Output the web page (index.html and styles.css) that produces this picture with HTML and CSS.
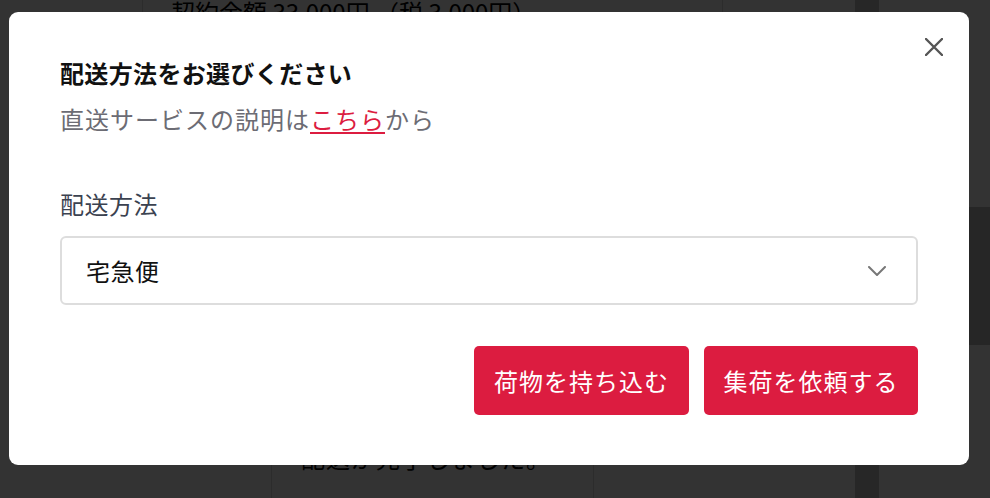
FILE: index.html
```html
<!DOCTYPE html>
<html lang="ja">
<head>
<meta charset="utf-8">
<title>配送方法の選択</title>
<link rel="stylesheet" href="styles.css">
</head>
<body>
  <div class="page">
    <main class="content">
      <div class="row row-top">契約金額 33,000円 （税 3,000円）</div>
      <div class="spacer"></div>
      <div class="row row-bottom">配送が完了しました。</div>
    </main>
    <div class="rail"></div>
    <aside class="side">
      <div class="side-block"></div>
    </aside>
  </div>

  <div class="overlay">
    <section class="modal" role="dialog" aria-labelledby="modal-title">
      <button class="close" type="button" aria-label="閉じる">
        <svg viewBox="0 0 18 18" width="18" height="18" aria-hidden="true">
          <path d="M1 1 L17 17 M17 1 L1 17" fill="none" stroke="#555" stroke-width="2.4" stroke-linecap="round"/>
        </svg>
      </button>
      <h2 class="modal-title" id="modal-title">配送方法をお選びください</h2>
      <p class="modal-sub">直送サービスの説明は<a class="link" href="#">こちら</a>から</p>

      <div class="field-label">配送方法</div>
      <div class="select" role="combobox" aria-expanded="false">
        <span class="select-value">宅急便</span>
        <svg class="chevron" viewBox="0 0 18 10" width="18" height="10" aria-hidden="true">
          <path d="M1 1 L9 9 L17 1" fill="none" stroke="#777" stroke-width="2" stroke-linecap="round" stroke-linejoin="round"/>
        </svg>
      </div>

      <div class="actions">
        <button class="btn btn-wide" type="button">荷物を持ち込む</button>
        <button class="btn" type="button">集荷を依頼する</button>
      </div>
    </section>
  </div>
</body>
</html>
```

FILE: styles.css
```css
* {
  box-sizing: border-box;
}

html, body {
  margin: 0;
  height: 100%;
}

body {
  font-family: "Noto Sans CJK JP", "Noto Sans", sans-serif;
  background: #fff;
  color: #000;
  overflow: hidden;
}

/* underlying page */
.page {
  display: flex;
  height: 100vh;
}

.content {
  width: 855px;
  display: flex;
  flex-direction: column;
}

.row {
  font-size: 24px;
  line-height: 36px;
  color: #000;
  border-left: 1px solid #ddd;
  border-right: 1px solid #ddd;
}

.row-top {
  margin-left: 142px;
  width: 581px;
  margin-top: -6px;
  padding-left: 28px;
  height: 200px;
}

.spacer {
  flex: 1;
}

.row-bottom {
  margin-left: 271px;
  width: 323px;
  height: 60px;
  padding: 2px 0 0 29px;
  letter-spacing: 1px;
}

.rail {
  width: 24px;
  background: #c0c0c0;
}

.side {
  flex: 1;
  padding: 207px 0 0 90px;
}

.side-block {
  height: 138px;
  background: #bcbcbc;
}

/* dialog */
.overlay {
  position: fixed;
  inset: 0;
  background: rgba(0, 0, 0, 0.8);
  display: flex;
  align-items: flex-start;
  padding: 12px 0 0 9px;
}

.modal {
  position: relative;
  width: 960px;
  background: #fff;
  border-radius: 9px;
  padding: 43px 51px 50px;
}

.close {
  position: absolute;
  top: 26px;
  right: 26px;
  width: 18px;
  height: 18px;
  padding: 0;
  border: 0;
  background: none;
  display: flex;
}

.modal-title {
  margin: 0;
  font-size: 24px;
  line-height: 36px;
  font-weight: 700;
  color: #111;
  letter-spacing: 0.35px;
}

.modal-sub {
  margin: 10px 0 0;
  font-size: 24px;
  line-height: 36px;
  color: #6c6c74;
  letter-spacing: 1px;
}

.link {
  color: #dc1c40;
  text-decoration: underline;
  text-decoration-thickness: 2px;
  text-underline-offset: 3px;
}

.field-label {
  margin-top: 49px;
  font-size: 24px;
  line-height: 36px;
  color: #3b4250;
  letter-spacing: 0.5px;
}

.select {
  margin-top: 14px;
  height: 69px;
  border: 2px solid #dddddd;
  border-radius: 6px;
  display: flex;
  align-items: center;
  justify-content: space-between;
  padding: 0 30px 0 24px;
  font-size: 24px;
  color: #111;
  letter-spacing: 0.5px;
}

.chevron {
  display: block;
}

.actions {
  margin-top: 41px;
  display: flex;
  justify-content: flex-end;
  gap: 15px;
}

.btn {
  height: 69px;
  width: 214px;
  border: 0;
  border-radius: 5px;
  background: #dc1c40;
  color: #fff;
  font-family: inherit;
  font-size: 24px;
  letter-spacing: 1px;
  padding: 0;
}

.btn-wide {
  width: 215px;
}
```
